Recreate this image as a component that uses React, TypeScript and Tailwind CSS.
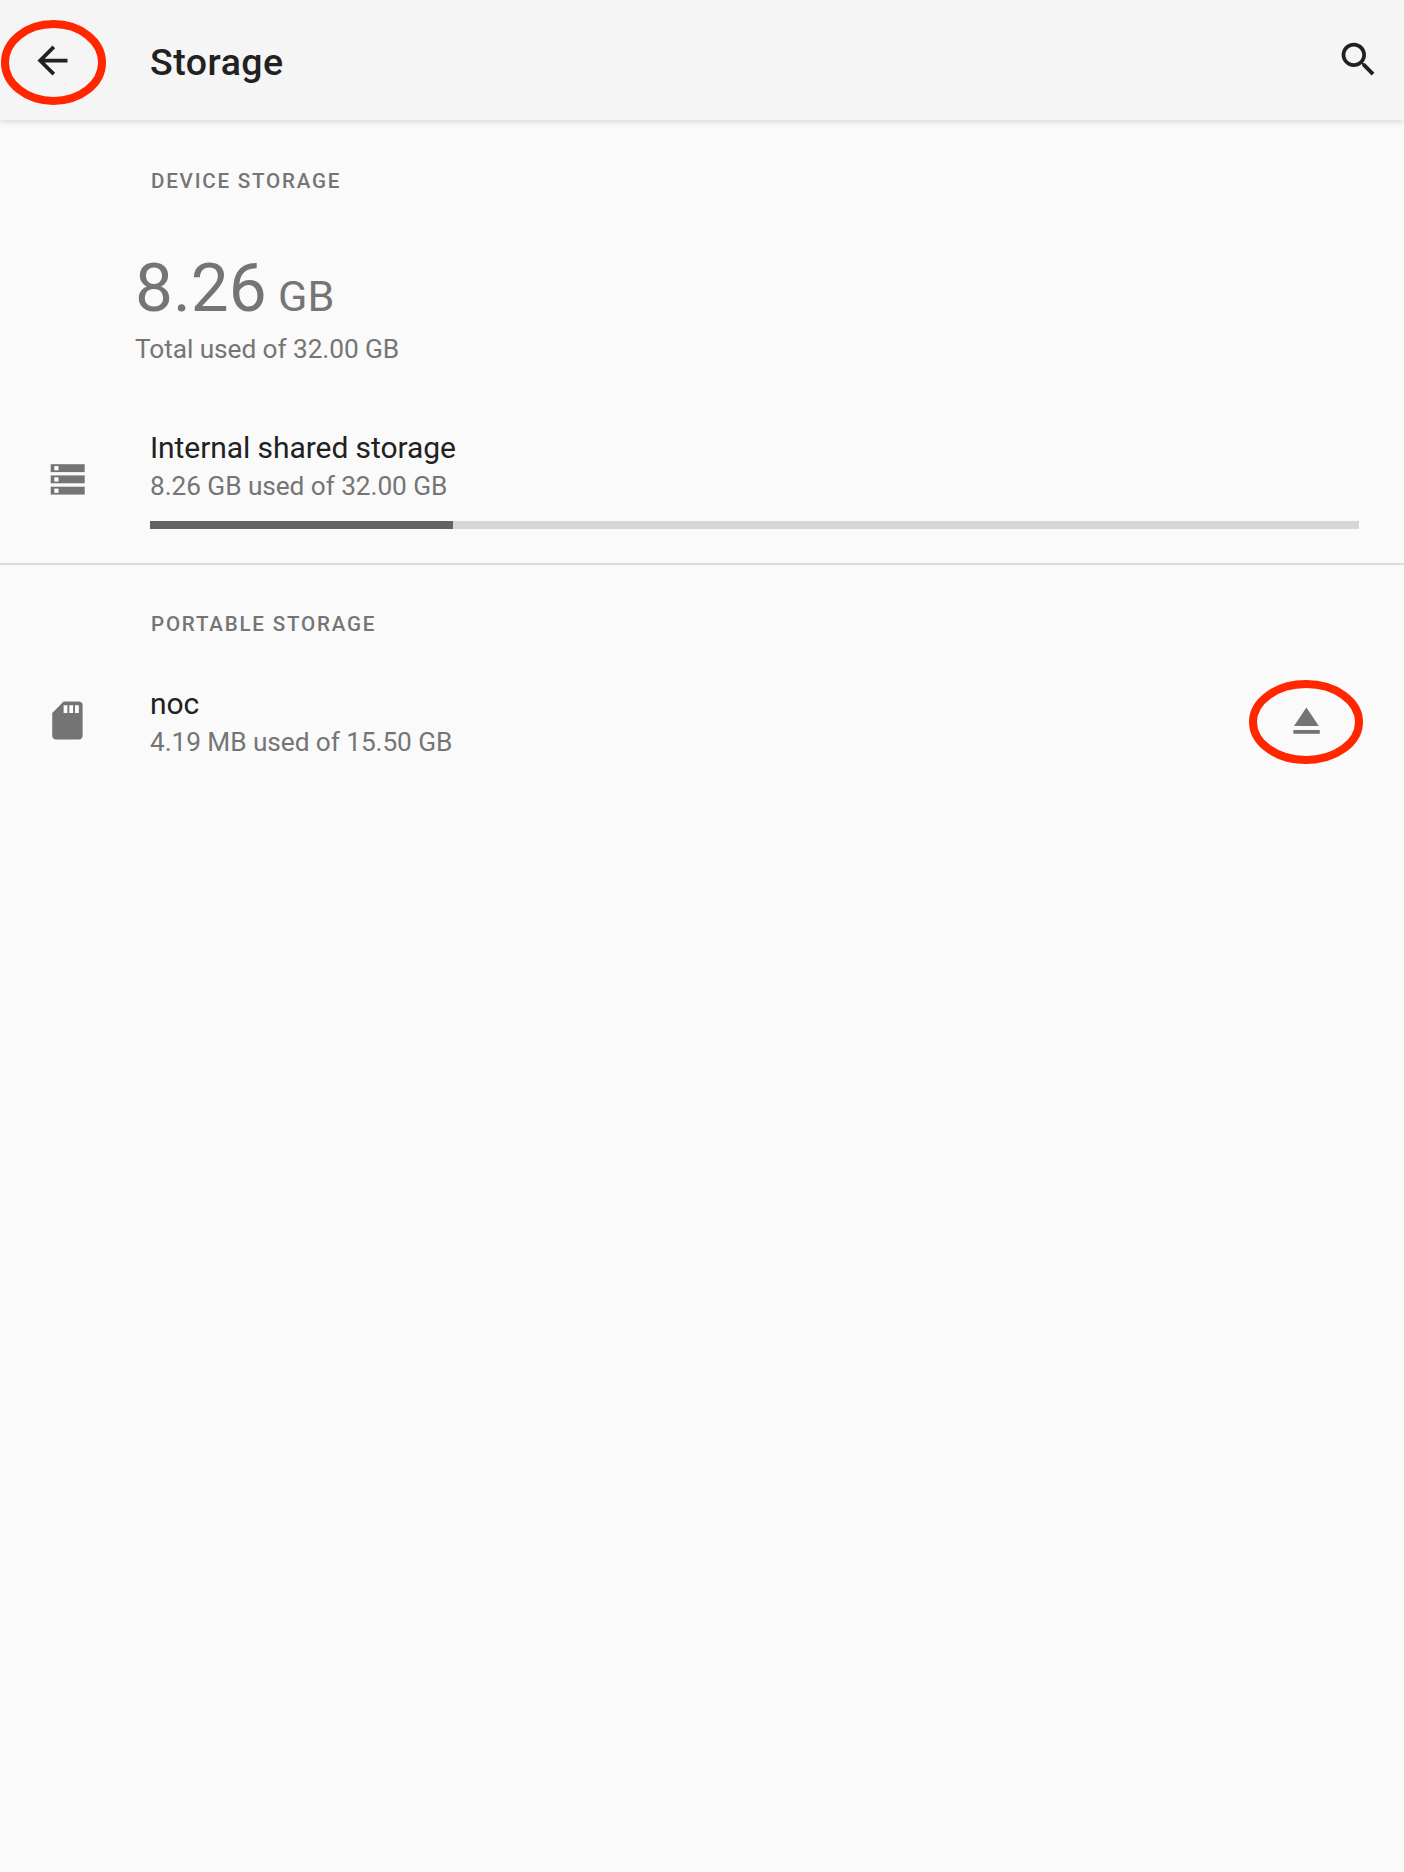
import React from "react";

function Highlight({ className, rx, ry }: { className: string; rx: number; ry: number }) {
  const w = rx * 2 + 8;
  const h = ry * 2 + 8;
  return (
    <svg className={`pointer-events-none absolute ${className}`} width={w} height={h}>
      <ellipse cx={w / 2} cy={h / 2} rx={rx} ry={ry} fill="none" stroke="#ff2600" strokeWidth="8" />
    </svg>
  );
}

function StorageIcon() {
  return (
    <svg width="34" height="31" viewBox="0 0 34 31" className="overflow-visible">
      {[0.2, 11.4, 22.7].map((y) => (
        <g key={y}>
          <rect x="-0.3" y={y} width="34" height="7.9" fill="#747474" />
          <rect x="3.3" y={y + 1.9} width="4.2" height="4.2" fill="#fff" />
        </g>
      ))}
    </svg>
  );
}

function SectionLabel({ children }: { children: string }) {
  return (
    <h2 className="pl-[151px] text-[20.6px] leading-6 font-medium tracking-[1.77px] whitespace-nowrap text-[#757575]">
      {children}
    </h2>
  );
}

function ItemText({ title, summary }: { title: string; summary: string }) {
  return (
    <>
      <div className="h-9 text-[30px] leading-9 tracking-[-0.07px] whitespace-nowrap text-[#212121]">{title}</div>
      <div className="mt-0.5 h-9 text-[26.25px] leading-9 tracking-[-0.07px] whitespace-nowrap text-[#757575]">
        {summary}
      </div>
    </>
  );
}

export default function App() {
  return (
    <div className="min-h-[1872px] w-[1404px] overflow-hidden bg-[#fafafa] font-['Roboto',sans-serif]">
      <header className="relative flex h-[120px] items-start bg-[#f5f5f5] shadow-[0_2px_6px_rgba(0,0,0,0.14)]">
        <button aria-label="Back" className="relative mt-[38px] ml-[30px] block h-[45px] w-[45px] shrink-0">
          <svg width="45" height="45" viewBox="0 0 24 24" fill="#212121">
            <path d="M20 11H7.83l5.59-5.59L12 4l-8 8 8 8 1.41-1.41L7.83 13H20v-2z" />
          </svg>
          <Highlight className="-top-[18px] -left-[29px] max-w-none" rx={48.5} ry={38.5} />
        </button>
        <h1 className="mt-[37px] ml-[75px] text-[37.5px] leading-[50px] font-medium tracking-[0.5px] text-[#212121]">
          Storage
        </h1>
        <button aria-label="Search" className="mt-[37px] mr-[23px] ml-auto">
          <svg width="45" height="45" viewBox="0 0 24 24" fill="#212121">
            <path d="M15.5 14h-.79l-.28-.27C15.41 12.59 16 11.11 16 9.5 16 5.91 13.09 3 9.5 3S3 5.91 3 9.5 5.91 16 9.5 16c1.61 0 3.09-.59 4.23-1.57l.27.28v.79l5 4.99L20.49 19l-4.99-5zm-6 0C7.01 14 5 11.99 5 9.5S7.01 5 9.5 5 14 7.01 14 9.5 11.99 14 9.5 14z" />
          </svg>
        </button>
      </header>

      <main>
        <section className="h-[445px] border-b-2 border-[#dbdbdb] pt-[49px]">
          <SectionLabel>DEVICE STORAGE</SectionLabel>
          <div className="mt-[55px] pl-[135px] text-[#757575]">
            <div className="flex h-20 items-baseline whitespace-nowrap">
              <span className="text-[67.5px] leading-[80px]">8.26</span>
              <span className="ml-[11.5px] text-[43.2px]">GB</span>
            </div>
            <div className="mt-[3px] h-9 text-[26.25px] leading-9 tracking-[-0.07px]">Total used of 32.00 GB</div>
          </div>
          <div className="mt-[63px] flex">
            <div className="w-[150px] shrink-0 pt-[34px] pl-[51px]">
              <StorageIcon />
            </div>
            <div className="mr-[45px] flex-1">
              <ItemText title="Internal shared storage" summary="8.26 GB used of 32.00 GB" />
              <div className="mt-[17px] h-2 bg-[#d6d6d6]">
                <div className="h-2 w-[303px] bg-[#636363]" />
              </div>
            </div>
          </div>
        </section>

        <section className="pt-[47px]">
          <SectionLabel>PORTABLE STORAGE</SectionLabel>
          <div className="mt-[50px] flex">
            <div className="w-[150px] shrink-0 pt-[12px] pl-[45px]">
              <svg width="45.6" height="45.6" viewBox="0.2 0.15 24 24">
                <path d="M10 4h8v4h-8z" fill="#fff" />
                <path
                  fill="#747474"
                  d="M18 2h-8L4.02 8 4 20c0 1.1.9 2 2 2h12c1.1 0 2-.9 2-2V4c0-1.1-.9-2-2-2zm-6 6h-2V4h2v4zm3 0h-2V4h2v4zm3 0h-2V4h2v4z"
                />
              </svg>
            </div>
            <div className="flex-1">
              <ItemText title="noc" summary="4.19 MB used of 15.50 GB" />
            </div>
            <button aria-label="Eject" className="relative mt-[21px] mr-[84px] h-[27px] w-[27px]">
              <svg width="27" height="27" viewBox="0 0 27 27" fill="#747474">
                <path d="M13.4 0.4L25.8 19H1z" />
                <path d="M0.3 23H26.8V26.8H0.3z" />
              </svg>
              <Highlight className="-top-[27px] -left-[44px] max-w-none" rx={53} ry={38} />
            </button>
          </div>
        </section>
      </main>
    </div>
  );
}
